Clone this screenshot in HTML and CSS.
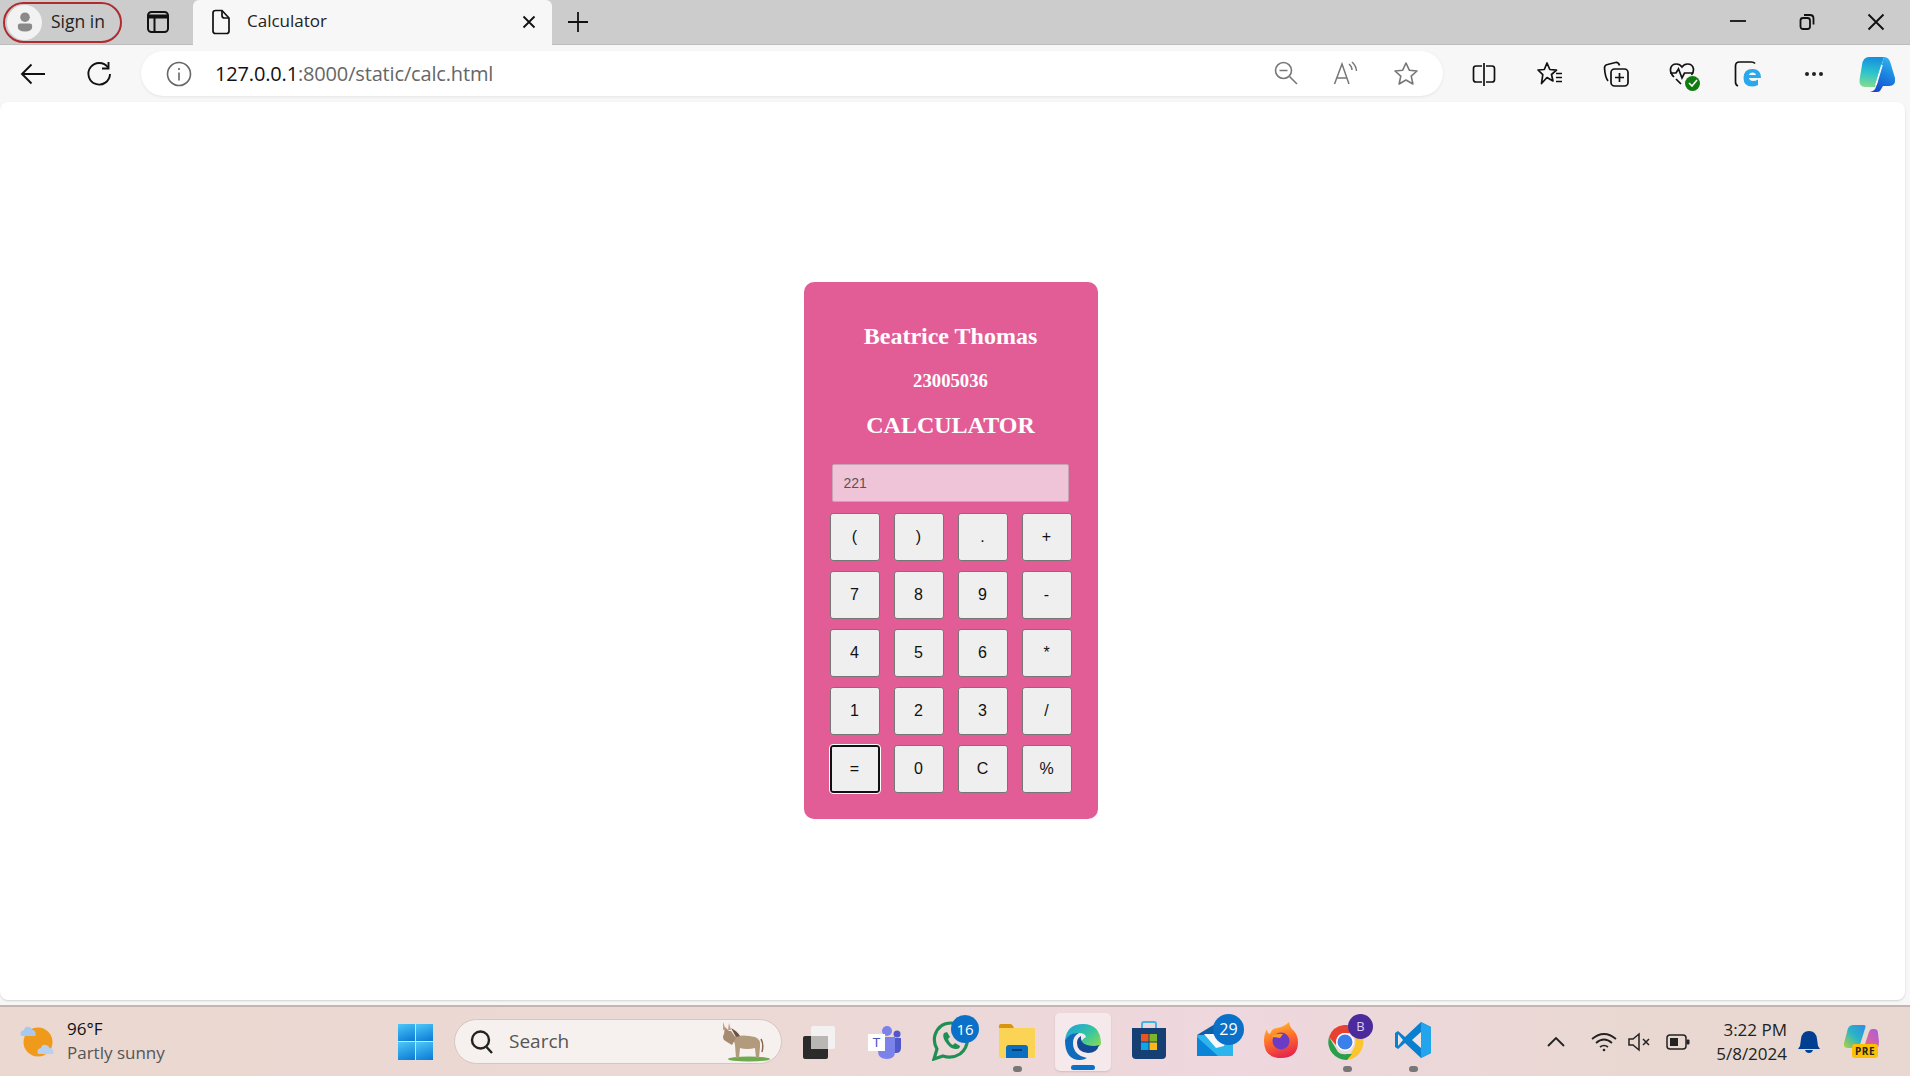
FILE: index.html
```html
<!DOCTYPE html>
<html lang="en">
<head>
    <meta charset="UTF-8">
    <meta name="viewport" content="width=device-width, initial-scale=1.0">
    <title>Calculator</title>
    <link rel="stylesheet" href="styles.css">
</head>
<body>

    <!-- Tab strip -->
    <div class="tabstrip">
        <div class="signin">
            <span class="avatar">
                <svg width="24" height="28" viewBox="0 0 24 28"><circle cx="12" cy="8" r="6" fill="#8a8a8a"/><path d="M3 19q0-3 3-3h12q3 0 3 3v1q0 6-9 6t-9-6z" fill="#8a8a8a"/></svg>
            </span>
            <span>Sign in</span>
        </div>
        <div class="strip-btn">
            <svg width="24" height="24" viewBox="0 0 24 24" fill="none" stroke="#111" stroke-width="2"><rect x="2" y="2" width="20" height="20" rx="3.5"/><path d="M2 6.5h20" stroke-width="4"/><path d="M8.5 6v16"/></svg>
        </div>
        <div class="tab">
            <svg width="20" height="26" viewBox="0 0 20 26" fill="none" stroke="#111" stroke-width="1.7"><path d="M4 1.5h7l7 7.5v13q0 2.500-2.500 2.500h-11q-2.500 0-2.500-2.500v-18q0-2.500 2.500-2.500z"/><path d="M11 1.500v5q0 2.500 2.500 2.500h4.500"/></svg>
            <span class="tab-title">Calculator</span>
            <svg class="tab-close" width="14" height="14" viewBox="0 0 14 14" stroke="#111" stroke-width="1.800"><path d="M1.500 1.500l11 11M12.500 1.500l-11 11"/></svg>
        </div>
        <div class="new-tab">
            <svg width="22" height="22" viewBox="0 0 22 22" stroke="#111" stroke-width="1.800"><path d="M11 1v20M1 11h20"/></svg>
        </div>
        <div class="win-controls">
            <div class="win-btn"><svg width="16" height="16" viewBox="0 0 16 16" stroke="#111" stroke-width="1.800"><path d="M0 8h16"/></svg></div>
            <div class="win-btn"><svg width="16" height="18" viewBox="0 0 16 18" fill="none" stroke="#111" stroke-width="1.800"><rect x="1.500" y="5" width="9.500" height="11" rx="2.500"/><path d="M5 2h6q3.500 0 3.500 3.500v6"/></svg></div>
            <div class="win-btn"><svg width="18" height="18" viewBox="0 0 18 18" stroke="#111" stroke-width="1.900"><path d="M1.500 1.500l15 15M16.500 1.500l-15 15"/></svg></div>
        </div>
    </div>

    <!-- Address bar and toolbar -->
    <div class="toolbar">
        <div class="tool">
            <svg width="26" height="22" viewBox="0 0 26 22" fill="none" stroke="#111" stroke-width="1.900"><path d="M25 11H2M11.500 1.500L2 11l9.500 9.500"/></svg>
        </div>
        <div class="tool">
            <svg width="26" height="26" viewBox="0 0 26 26" fill="none" stroke="#111" stroke-width="1.900"><path d="M22 6.500A10.800 10.800 0 1 0 24 13"/><path d="M22.500 1v6.500H16"/></svg>
        </div>
        <div class="address">
            <svg class="info" width="26" height="26" viewBox="0 0 26 26" fill="none" stroke="#666" stroke-width="1.600"><circle cx="13" cy="13" r="11.500"/><path d="M13 11.500v8M13 7v2"/></svg>
            <span class="url"><span class="host">127.0.0.1</span>:8000/static/calc.html</span>
            <div class="address-tools">
                <div class="addr-tool"><svg width="24" height="24" viewBox="0 0 24 24" fill="none" stroke="#777" stroke-width="1.600"><circle cx="9.500" cy="9.500" r="8"/><path d="M5.500 9.500h8M15.500 15.500l7.500 7.500"/></svg></div>
                <div class="addr-tool"><svg width="26" height="24" viewBox="0 0 26 24" fill="none" stroke="#777" stroke-width="1.500"><path d="M1.500 23L9 3l7 20M4 17h10"/><path d="M16 3q3 2.500 3 6M19 1q4 3.500 4.500 9"/></svg></div>
                <div class="addr-tool"><svg width="26" height="26" viewBox="0 0 26 26" fill="none" stroke="#777" stroke-width="1.600" stroke-linejoin="round"><path d="M13 2l3.300 7.200 7.700.8-5.800 5.200 1.700 7.800L13 19l-6.900 4 1.700-7.800L2 10l7.700-.8z"/></svg></div>
            </div>
        </div>
        <div class="tool">
            <svg width="24" height="24" viewBox="0 0 24 24" fill="none" stroke="#111" stroke-width="1.700"><path d="M10 4H4q-2.500 0-2.500 2.500v11Q1.500 20 4 20h6M14 4h6q2.500 0 2.500 2.500v11q0 2.500-2.500 2.500h-6M12 1v23"/></svg>
        </div>
        <div class="tool">
            <svg width="26" height="26" viewBox="0 0 26 26" fill="none" stroke="#111" stroke-width="1.700" stroke-linejoin="round"><path d="M10 2l2.800 6.500 6.700.6-5 4.400 1.500 6.500-6-3.500-5.500 6 1.300-8.800L1 9l6.300-.5z"/><path d="M19 12.500h6M19 16.500h6M19 20.500h6"/></svg>
        </div>
        <div class="tool">
            <svg width="26" height="26" viewBox="0 0 26 26" fill="none" stroke="#111" stroke-width="1.700"><rect x="8" y="8" width="17" height="17" rx="3.500"/><path d="M16.500 12v9M12 16.500h9"/><path d="M5 20Q2 16 1.500 7q0-3 3-3.500l8-2q3-.5 4 3"/></svg>
        </div>
        <div class="tool icon-wrap">
            <svg width="26" height="24" viewBox="0 0 26 24" fill="none" stroke="#111" stroke-width="1.700"><path d="M5 15Q1 11 1.500 7q.8-5 6-5 3.500 0 5.500 3 2-3 5.500-3 5.200 0 6 5 .3 3-2 6"/><path d="M1 11h6l2.500-4 3.500 9 2.500-5h9"/><path d="M7 17l5 5"/></svg>
            <span class="green-dot">
                <svg width="10" height="8" viewBox="0 0 10 8" fill="none" stroke="#fff" stroke-width="1.600"><path d="M1 4l3 3 5-6"/></svg>
            </span>
        </div>
        <div class="tool">
            <svg width="28" height="28" viewBox="0 0 28 28" fill="none"><path d="M4 26Q1.500 25 1.500 22V6q0-4 4-4H17q3 0 4 1.500" stroke="#111" stroke-width="1.700"/><path d="M27 18H15q.5 3 4 3 2.500 0 5-1.500V25q-3 1.500-6 1.500-8.500 0-8.500-8.500 0-9 9-9 8.500 0 8.500 9zM22 15q-.5-2.500-3.500-2.500T15 15z" fill="#29a9ec" fill-rule="evenodd"/></svg>
        </div>
        <div class="tool">
            <svg width="20" height="6" viewBox="0 0 20 6" fill="#222"><circle cx="3" cy="3" r="2"/><circle cx="10" cy="3" r="2"/><circle cx="17" cy="3" r="2"/></svg>
        </div>
        <div class="tool copilot-slot">
            <svg width="38" height="36" viewBox="0 0 38 36">
                <defs>
                    <linearGradient id="copA" x1="0.300" y1="0" x2="0.200" y2="1"><stop offset="0" stop-color="#1590e0"/><stop offset="0.500" stop-color="#2cc4cc"/><stop offset="1" stop-color="#86dc8c"/></linearGradient>
                    <linearGradient id="copB" x1="0.700" y1="0" x2="0.300" y2="1"><stop offset="0" stop-color="#2fb4ec"/><stop offset="0.500" stop-color="#1a80e0"/><stop offset="1" stop-color="#1a48cc"/></linearGradient>
                </defs>
                <path d="M11 1h15l-9 30H7q-6 0-5.500-7L4 9q1-8 7-8z" fill="url(#copA)"/>
                <path d="M26 1q5 0 6.500 6L37 22q1 8-6 8h-6l-3 5q-1 1-3 1h-7q5-1 6-5z" fill="url(#copB)"/>
                <path d="M24 9l-6 20" fill="none" stroke="#fff" stroke-width="1.600"/>
            </svg>
        </div>
    </div>

    <!-- Calculator page -->
    <div class="viewport">
        <div class="page">
            <div class="calc">
                <h2>Beatrice Thomas</h2>
                <h3>23005036</h3>
                <h2>CALCULATOR</h2>
                <input class="display" type="text" value="221">
                <div class="keys">
                    <button>(</button>
                    <button>)</button>
                    <button>.</button>
                    <button>+</button>
                    <button>7</button>
                    <button>8</button>
                    <button>9</button>
                    <button>-</button>
                    <button>4</button>
                    <button>5</button>
                    <button>6</button>
                    <button>*</button>
                    <button>1</button>
                    <button>2</button>
                    <button>3</button>
                    <button>/</button>
                    <button class="focused">=</button>
                    <button>0</button>
                    <button>C</button>
                    <button>%</button>
                </div>
            </div>
        </div>
    </div>

    <!-- Windows taskbar -->
    <div class="taskbar">
        <div class="weather">
            <svg width="40" height="40" viewBox="0 0 40 40">
                <circle cx="20" cy="21" r="14.500" fill="#f09a1c"/>
                <path d="M3 15q-2-5 3-6 1-4 5-3 3 .5 3.500 3 4 .5 3 6z" fill="#a9c8ee"/>
                <path d="M20 33q-2-5 3-6 1-4 5-3 3 .5 3.500 3 4.500.5 4 6z" fill="#b7d0f0"/>
            </svg>
            <div class="weather-text">
                <div class="temp">96°F</div>
                <div class="cond">Partly sunny</div>
            </div>
        </div>

        <div class="start">
            <span class="pane"></span><span class="pane"></span>
            <span class="pane"></span><span class="pane"></span>
        </div>

        <div class="search">
            <svg width="24" height="26" viewBox="0 0 24 26" fill="none" stroke="#222" stroke-width="2.400"><circle cx="10.500" cy="11" r="8.500"/><path d="M16.500 18l5.500 6"/></svg>
            <span class="search-label">Search</span>
            <svg class="donkey" width="56" height="40" viewBox="0 0 56 40">
                <ellipse cx="34" cy="37" rx="21" ry="2.500" fill="#6fa84e"/>
                <path d="M18 15q10-3 22 0 6 2 5 10l-1 11h-3l-1-10q-8 2-15 0l-1 10h-3l-1-13z" fill="#b29a7c"/>
                <path d="M10 5l4 4 2 0 5 7-4 7-5-3-3-2q-2-3 0-6z" fill="#a58a6f"/>
                <path d="M8 0l3 8-3 0zM14 1l2 7-3 0z" fill="#c99a86"/>
                <path d="M16 6q6 3 9 8l-4 1z" fill="#6b5242"/>
                <path d="M46 17q3 5 1 13" fill="none" stroke="#8a6b50" stroke-width="1.500"/>
            </svg>
        </div>

        <div class="apps">
            <div class="app">
                <svg width="34" height="36" viewBox="0 0 34 36"><rect x="1" y="12" width="25" height="23" rx="2" fill="#2b2b2b"/><rect x="9" y="2" width="24" height="23" rx="2" fill="#f3f1f1"/><rect x="9" y="12" width="17" height="13" fill="#b9b6b4"/></svg>
            </div>
            <div class="app">
                <svg width="36" height="36" viewBox="0 0 36 36"><circle cx="20" cy="7" r="5" fill="#7b83eb"/><circle cx="30" cy="10" r="3.500" fill="#5059c9"/><path d="M24 14h10v10q0 5-5 5h-5z" fill="#5059c9"/><path d="M11 13h17v15q0 7-8 7-9 0-9-8z" fill="#7b83eb"/><rect x="1" y="10" width="17" height="17" fill="#fff"/><text class="teams-t" x="9.500" y="23">T</text></svg>
            </div>
            <div class="app">
                <svg class="lift" width="38" height="42" viewBox="0 0 38 42" fill="none"><path d="M2 40l3-10Q1 23 3 16 7 4 19 4q13 0 16 12 2 12-7 19-8 5-17 2z" stroke="#1f8f55" stroke-width="3.200"/><path d="M12 14q-2 3 1 8 4 7 10 8 5 .5 5-3l-5-3-2 2q-3-1-5-6l2-2-3-5z" fill="#1f8f55"/></svg>
                <span class="badge badge-wa">16</span>
            </div>
            <div class="app">
                <svg class="lift" width="38" height="38" viewBox="0 0 38 38"><path d="M1 5q0-2 2-2h9q2 0 3 2l1 2H1z" fill="#d9930f"/><path d="M1 7h35q1 0 1 1v28q0 1-1 1H3q-2 0-2-2z" fill="#fbd455"/><path d="M8 27q0-3 3-3h16q3 0 3 3v10H8z" fill="#0a6fc0"/><rect x="14" y="28" width="10" height="2" fill="#053b70"/></svg>
                <span class="dot"></span>
            </div>
            <div class="app">
                <span class="app-active"></span>
                <svg class="edge" width="38" height="38" viewBox="0 0 38 38">
                    <defs><linearGradient id="edgeG" x1="0" y1="0" x2="1" y2="0.800"><stop offset="0" stop-color="#1b9de2"/><stop offset="0.600" stop-color="#36c5a0"/><stop offset="1" stop-color="#7ed95e"/></linearGradient></defs>
                    <path d="M1 17Q3 1 19 1q17 0 18 19 0 4-5 4H17q-1-7 5-10-1-4-7-4Q6 10 1 17z" fill="url(#edgeG)"/>
                    <path d="M1 17q5-8 14-7-6 3-6 10 0 12 14 15-3 2-7 2Q1 37 1 17z" fill="#0f6cbd"/>
                    <path d="M13 20q0-5 4-7-1 7 6 9 7 2 12 0-2 8-11 8-11-1-11-10z" fill="#134a94"/>
                </svg>
                <span class="active-bar"></span>
            </div>
            <div class="app">
                <svg class="lift" width="36" height="40" viewBox="0 0 36 40"><path d="M11 8V4q0-2 2-2h10q2 0 2 2v4" fill="none" stroke="#43b4e8" stroke-width="2"/><path d="M1 8h34v27q0 4-4 4H5q-4 0-4-4z" fill="#163f73"/><rect x="10" y="14" width="7.500" height="7.500" fill="#e8551f"/><rect x="18.500" y="14" width="7.500" height="7.500" fill="#7bb52a"/><rect x="10" y="22.500" width="7.500" height="7.500" fill="#0ea5e9"/><rect x="18.500" y="22.500" width="7.500" height="7.500" fill="#fdb813"/></svg>
            </div>
            <div class="app">
                <svg class="lift" width="38" height="34" viewBox="0 0 38 34"><path d="M1 12L19 1v10L1 22z" fill="#0f5fa8"/><path d="M1 12h36v21H1z" fill="#2cb5ec"/><path d="M1 14l21 19H1z" fill="#0a84d6"/><path d="M8 11h24l-4 12-8 2z" fill="#f5f7f9"/></svg>
                <span class="badge badge-mail">29</span>
            </div>
            <div class="app">
                <svg class="lift" width="36" height="38" viewBox="0 0 36 38">
                    <defs><linearGradient id="foxG" x1="0.300" y1="0" x2="0.600" y2="1"><stop offset="0" stop-color="#ffbd2e"/><stop offset="0.500" stop-color="#ff6a2b"/><stop offset="1" stop-color="#e3224f"/></linearGradient></defs>
                    <path d="M26 1q1 6 5 9 4 5 4 11 0 16-17 16Q1 37 1 20 1 13 4 8q0 4 3 5 2-6 7-6 7-1 12-6z" fill="url(#foxG)"/>
                    <circle cx="18" cy="20" r="8.500" fill="#6b3bc4"/>
                    <path d="M8 16q4-4 12-3l-3 4q-5-1-9-1z" fill="#ff9a2e"/>
                </svg>
            </div>
            <div class="app">
                <svg width="42" height="42" viewBox="0 0 42 42"><path d="M3 16A18 18 0 0 1 35 12H19q-6 0-8 5l-1 7z" fill="#e8412f"/><path d="M35 12a18 18 0 0 1-14 27l7-12q3-6 0-15z" fill="#fbc52d"/><path d="M21 39A18 18 0 0 1 3 16l9 15q3 3 9 2l5 0z" fill="#2a9f4a"/><circle cx="19" cy="21" r="9" fill="#fff"/><circle cx="19" cy="21" r="7.500" fill="#3b7fea"/></svg>
                <span class="badge badge-profile">B</span>
                <span class="dot"></span>
            </div>
            <div class="app">
                <svg class="lift" width="38" height="38" viewBox="0 0 38 38"><path d="M27 1l10 5v26l-10 5-16-15-7 6-3-2v-14l3-2 7 6z" fill="#0a7fd0"/><path d="M27 1l10 5v26l-10 5z" fill="#22a5ec"/><path d="M27 11l-9 8 9 8z" fill="#f0e4e2"/><path d="M4 13l5 6-5 6z" fill="#f0e4e2"/></svg>
                <span class="dot"></span>
            </div>
        </div>

        <div class="tray">
            <svg class="tray-chevron" width="18" height="10" viewBox="0 0 18 10" fill="none" stroke="#222" stroke-width="1.800"><path d="M1 9l8-8 8 8"/></svg>
            <svg class="tray-wifi" width="26" height="20" viewBox="0 0 26 20" fill="none" stroke="#222" stroke-width="1.700"><path d="M1 7q12-10 24 0M5 11q8-7 16 0M9 15q4-3 8 0"/><circle cx="13" cy="18" r="1.300" fill="#222" stroke="none"/></svg>
            <svg class="tray-mute" width="24" height="20" viewBox="0 0 24 20" fill="none" stroke="#222" stroke-width="1.500"><path d="M1 7v6h4l6 5V2L5 7z"/><path d="M15 7l6 6M21 7l-6 6"/></svg>
            <svg class="tray-battery" width="24" height="16" viewBox="0 0 24 16"><rect x="1" y="1" width="19" height="14" rx="3" fill="none" stroke="#222" stroke-width="1.500"/><rect x="4" y="4" width="8" height="8" fill="#222"/><rect x="20.500" y="5.500" width="3" height="5" rx="1" fill="#222"/></svg>
            <div class="clock">
                <div>3:22 PM</div>
                <div>5/8/2024</div>
            </div>
            <svg class="tray-bell" width="22" height="24" viewBox="0 0 22 24" fill="#003e92"><path d="M11 1q7 0 8 8l1 7 2 3H0l2-3 1-7q1-8 8-8z"/><path d="M7 20h8q-1 3-4 3t-4-3z"/></svg>
            <div class="tray-copilot">
                <svg width="36" height="28" viewBox="0 0 36 28">
                    <defs><linearGradient id="copC" x1="0" y1="1" x2="1" y2="0"><stop offset="0" stop-color="#b7d23a"/><stop offset="0.500" stop-color="#2bb5c5"/><stop offset="1" stop-color="#2d8be8"/></linearGradient><linearGradient id="copD" x1="0" y1="1" x2="1" y2="0"><stop offset="0" stop-color="#f2697a"/><stop offset="1" stop-color="#a85ce0"/></linearGradient></defs>
                    <path d="M10 1h11q2 0 1.500 2L16 24H5q-5 0-4-5L4 8q1-7 6-7z" fill="url(#copC)"/>
                    <path d="M20 26l6-18q1-3 3-3h2q4 0 4 4l1 9q0 8-6 8z" fill="url(#copD)"/>
                </svg>
                <span class="pre">PRE</span>
            </div>
        </div>
    </div>

</body>
</html>
```

FILE: styles.css
```css
* {
    box-sizing: border-box;
}
body {
    margin: 0;
    height: 1076px;
    overflow: hidden;
    display: flex;
    flex-direction: column;
    background: #f7f7f7;
    font-family: 'Open Sans', 'Noto Sans', sans-serif;
}

/* tab strip */
.tabstrip {
    height: 45px;
    background: #cccccc;
    display: flex;
    align-items: center;
    border-bottom: 1px solid #bdbdbd;
}
.signin {
    width: 119px;
    height: 41px;
    margin-left: 3px;
    border: 2px solid #b02a2f;
    border-radius: 21px;
    display: flex;
    align-items: center;
    gap: 9px;
    padding: 0 0 2px 2px;
    font-size: 17.5px;
    color: #222;
}
.avatar {
    width: 35px;
    height: 35px;
    margin-top: 2px;
    border-radius: 50%;
    background: #f2f2f2;
    display: flex;
    align-items: center;
    justify-content: center;
}
.avatar svg {
    transform: scale(0.8);
}
.strip-btn {
    width: 71px;
    display: flex;
    justify-content: center;
}
.tab {
    width: 359px;
    height: 45px;
    background: #f7f7f7;
    border-radius: 6px 6px 0 0;
    display: flex;
    align-items: center;
    padding: 0 16px 0 18px;
    font-size: 17px;
    color: #222;
}
.tab-title {
    margin: 0 0 3px 16px;
}
.tab-close {
    margin-left: auto;
}
.new-tab {
    width: 52px;
    display: flex;
    justify-content: center;
}
.win-controls {
    margin-left: auto;
    display: flex;
}
.win-btn {
    width: 69px;
    display: flex;
    justify-content: center;
}

/* toolbar */
.toolbar {
    height: 57px;
    background: #f7f7f7;
    display: flex;
    align-items: center;
}
.tool {
    width: 66px;
    height: 40px;
    display: flex;
    align-items: center;
    justify-content: center;
    flex-shrink: 0;
}
.icon-wrap {
    position: relative;
}
.green-dot {
    position: absolute;
    left: 36px;
    top: 22px;
    width: 15px;
    height: 15px;
    border-radius: 50%;
    background: #107c10;
    display: flex;
    align-items: center;
    justify-content: center;
}
.copilot-slot {
    margin-left: -3px;
}
.address {
    width: 1302px;
    height: 45px;
    margin: 0 8px 0 9px;
    background: #fff;
    border-radius: 23px;
    box-shadow: 0 1px 3px rgba(0, 0, 0, 0.08);
    display: flex;
    align-items: center;
    padding: 0 7px 0 25px;
    flex-shrink: 0;
}
.info {
    flex-shrink: 0;
}
.url {
    margin-left: 23px;
    font-size: 20px;
    letter-spacing: -0.16px;
    color: #666;
}
.host {
    color: #111;
}
.address-tools {
    margin-left: auto;
    display: flex;
}
.addr-tool {
    width: 60px;
    display: flex;
    justify-content: center;
}

/* page */
.viewport {
    flex: 1;
    padding-right: 5px;
    min-height: 0;
}
.page {
    height: 898px;
    padding: 0 4px 2px 0;
    background: #fff;
    border-radius: 8px;
    box-shadow: 0 1px 2px rgba(0, 0, 0, 0.15);
    display: flex;
    align-items: center;
    justify-content: center;
}
.calc {
    width: 294px;
    height: 537px;
    background: #e25d96;
    border-radius: 10px;
    padding: 40px 26px 0 26px;
    color: #fff;
    text-align: center;
    font-family: 'Liberation Serif', 'Times New Roman', serif;
}
.calc h2 {
    margin: 0;
    font-size: 24px;
    line-height: 28px;
}
.calc h3 {
    margin: 20px 0 19px;
    font-size: 18.72px;
    line-height: 22px;
}
.display {
    display: block;
    width: 237px;
    height: 38px;
    margin: 25px 0 11px 2px;
    padding: 0 11px;
    background: #f0c4d8;
    border: 1px solid #c9a3b6;
    border-radius: 2px;
    font-family: 'Liberation Sans', Arial, sans-serif;
    font-size: 14px;
    color: #555;
}
.keys {
    display: grid;
    grid-template-columns: repeat(4, 50px);
    grid-auto-rows: 48px;
    column-gap: 14px;
    row-gap: 10px;
}
.keys button {
    padding: 0;
    background: #efefef;
    border: 1.500px solid #767676;
    border-radius: 3px;
    font-family: 'Liberation Sans', Arial, sans-serif;
    font-size: 16px;
    color: #111;
}
.keys .focused {
    border: 2px solid #101010;
    outline: 1px solid #fff;
}

/* taskbar */
.taskbar {
    height: 71px;
    background: linear-gradient(90deg, #ebd8d0 0%, #ecd8d6 45%, #eed7de 65%, #e9d8d2 85%, #e8d8d1 100%);
    border-top: 2px solid #c4b5b0;
    display: flex;
    align-items: center;
    position: relative;
}
.weather {
    width: 398px;
    display: flex;
    align-items: center;
    padding: 0 0 2px 18px;
    gap: 9px;
    flex-shrink: 0;
}
.weather-text {
    font-size: 17px;
    line-height: 24px;
}
.temp {
    color: #111;
}
.cond {
    color: #555;
}
.start {
    width: 35px;
    height: 36px;
    display: grid;
    grid-template-columns: 1fr 1fr;
    grid-template-rows: 1fr 1fr;
    gap: 1px;
    flex-shrink: 0;
}
.pane {
    background: linear-gradient(160deg, #4cc8f8, #0a78d4);
}
.search {
    width: 328px;
    height: 45px;
    margin-left: 21px;
    background: #f6f1ef;
    border: 1.500px solid #d5c6c2;
    border-radius: 23px;
    display: flex;
    align-items: center;
    padding: 0 10px 0 15px;
    flex-shrink: 0;
}
.search-label {
    margin: 0 0 1px 15px;
    font-size: 19px;
    color: #555;
}
.donkey {
    margin-left: auto;
}
.apps {
    display: flex;
    margin-left: 4px;
    flex-shrink: 0;
}
.app {
    width: 66px;
    height: 62px;
    display: flex;
    align-items: center;
    justify-content: center;
    position: relative;
}
.lift {
    margin-bottom: 3px;
}
.app-active {
    position: absolute;
    left: 5px;
    top: 2px;
    width: 56px;
    height: 58px;
    background: #f5e9ec;
    border-radius: 5px;
    box-shadow: 0 1px 2px rgba(0, 0, 0, 0.12);
}
.edge {
    position: relative;
}
.teams-t {
    font-family: 'Liberation Sans', Arial, sans-serif;
    font-size: 13px;
    fill: #4b53bc;
    text-anchor: middle;
}
.badge {
    position: absolute;
    display: flex;
    align-items: center;
    justify-content: center;
    border-radius: 50%;
    background: #0a70c8;
    color: #fff;
    font-size: 15px;
}
.badge-wa {
    top: 4px;
    left: 33px;
    width: 28px;
    height: 28px;
}
.badge-mail {
    top: 3px;
    left: 31px;
    width: 31px;
    height: 31px;
    font-size: 16px;
}
.badge-profile {
    top: 3px;
    left: 34px;
    width: 25px;
    height: 25px;
    background: #4b2a9e;
    color: #d7cdf5;
    font-size: 13px;
}
.dot {
    position: absolute;
    left: 29px;
    bottom: 1px;
    width: 9px;
    height: 6px;
    border-radius: 3px;
    background: #777;
}
.active-bar {
    position: absolute;
    left: 21px;
    bottom: 3px;
    width: 24px;
    height: 5px;
    border-radius: 3px;
    background: #0a70c8;
}
.tray {
    flex: 1;
    display: flex;
    align-items: center;
    height: 100%;
}
.tray-chevron {
    margin-left: 101px;
}
.tray-wifi {
    margin-left: 26px;
}
.tray-mute {
    margin-left: 11px;
}
.tray-battery {
    margin-left: 14px;
}
.clock {
    margin-left: -1px;
    width: 98px;
    text-align: right;
    font-size: 17px;
    line-height: 24px;
    color: #222;
}
.tray-bell {
    margin-left: 11px;
}
.tray-copilot {
    margin-left: 23px;
    position: relative;
    height: 36px;
}
.pre {
    position: absolute;
    left: 9px;
    top: 20px;
    padding: 0 3px;
    background: #ffc000;
    border-radius: 3px;
    font-size: 10px;
    font-weight: 700;
    line-height: 14px;
    letter-spacing: 0.5px;
    color: #222;
}
```
